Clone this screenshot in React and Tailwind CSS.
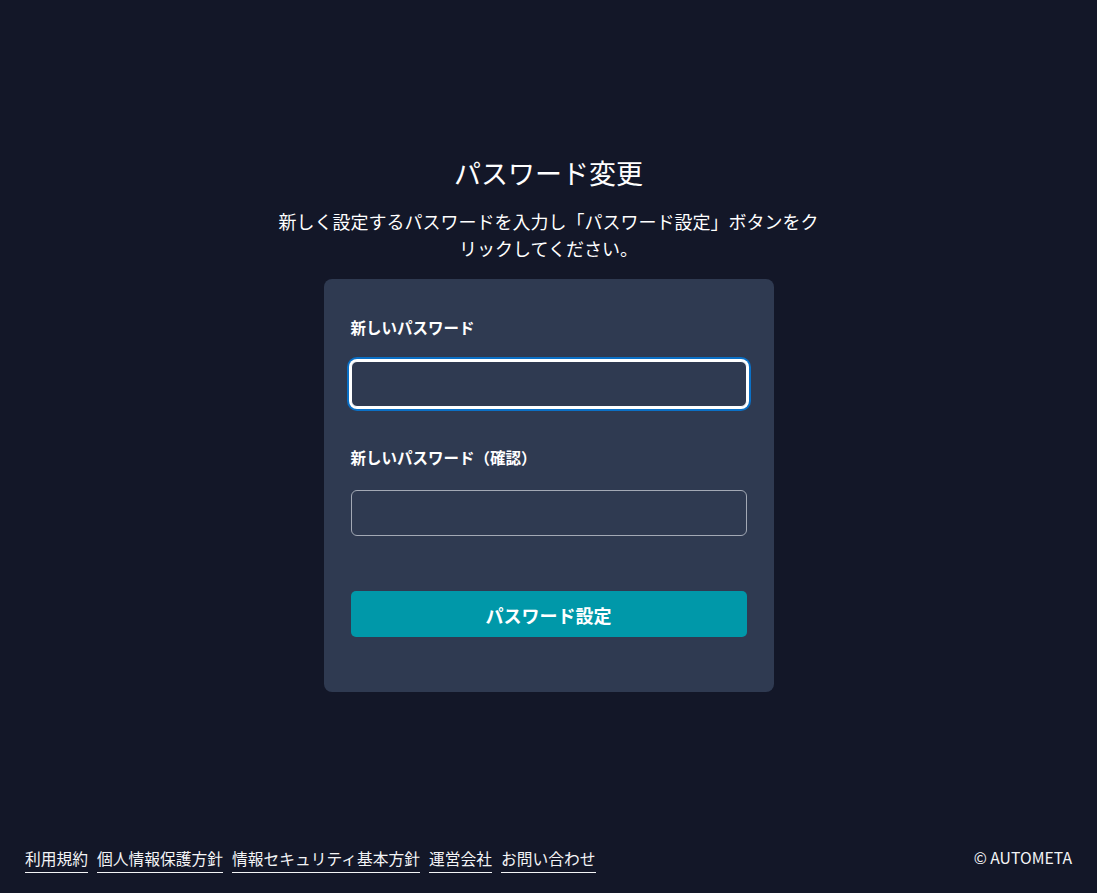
import React from 'react';

const links = ['利用規約', '個人情報保護方針', '情報セキュリティ基本方針', '運営会社', 'お問い合わせ'];

const PasswordChange = () => {
    return (
        <div
            className="min-h-screen bg-[#131728] text-white flex flex-col"
            style={{ fontFamily: '"Noto Sans CJK JP", "Noto Sans", sans-serif' }}
        >
            {/* Main */}
            <main className="flex-1 flex flex-col items-center pt-[153px]">
                <h1 className="text-[27px] leading-[40.5px] font-normal">パスワード変更</h1>
                <p className="mt-[14px] max-w-[550px] text-center text-[18px] leading-[27px]">
                    新しく設定するパスワードを入力し「パスワード設定」ボタンをクリックしてください。
                </p>

                {/* Card */}
                <div className="mt-[17px] w-[450px] bg-[#2f3a51] rounded-lg px-[27px] pt-[37px] pb-[55px]">
                    <label className="block text-[15.5px] leading-[23px] font-bold">新しいパスワード</label>
                    <input
                        type="password"
                        className="mt-[22px] block w-full h-[46px] rounded-md bg-[#2f3a51] border border-white shadow-[0_0_0_2px_#ffffff,0_0_0_4px_#0b70c6] outline-none px-3"
                    />

                    <label className="block mt-[39px] text-[15.5px] leading-[23px] font-bold">新しいパスワード（確認）</label>
                    <input
                        type="password"
                        className="mt-[21px] block w-full h-[46px] rounded-md bg-[#2f3a51] border border-[#a3a9b5] outline-none px-3"
                    />

                    <button className="mt-[55px] w-full h-[46px] rounded-[5px] bg-[#0098a9] pt-[3px] text-[18px] font-bold text-white">
                        パスワード設定
                    </button>
                </div>
            </main>

            {/* Footer */}
            <footer className="flex items-end justify-between px-[25px] pb-[20px]">
                <nav className="flex gap-[9px]">
                    {links.map(l => (
                        <a key={l} href="#" className="text-[15.75px] leading-[23px] text-gray-100 border-b border-gray-100 pb-[2px]">
                            {l}
                        </a>
                    ))}
                </nav>
                <div className="text-[15.75px] leading-[23px] text-gray-100 pb-[4px]">© AUTOMETA</div>
            </footer>
        </div>
    );
};

export default PasswordChange;
